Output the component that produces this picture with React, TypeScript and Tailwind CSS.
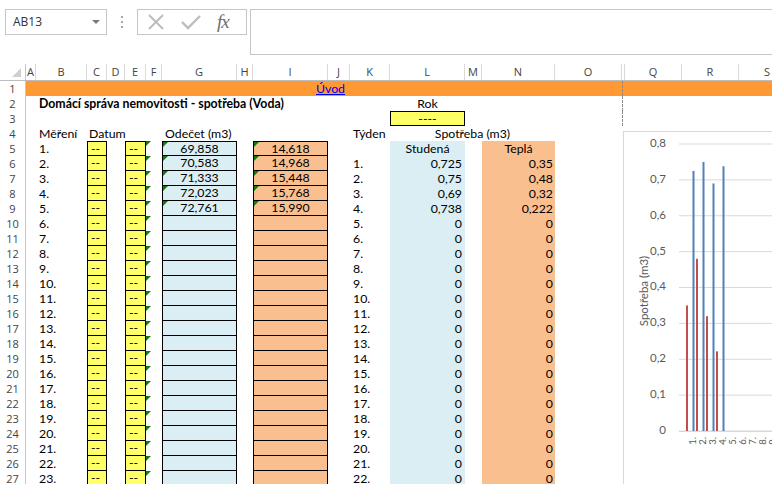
import React from "react";

const cols = ["A", "B", "C", "D", "E", "F", "G", "H", "I", "J", "K", "L", "M", "N", "O", "P", "Q", "R", "S"] as const;
type Col = (typeof cols)[number];

const W: Record<Col, string> = {
  A: "w-[10px]",
  B: "w-[51px]",
  C: "w-[20px]",
  D: "w-[18px]",
  E: "w-[21px]",
  F: "w-[16px]",
  G: "w-[75px]",
  H: "w-[16px]",
  I: "w-[75px]",
  J: "w-[22px]",
  K: "w-[40px]",
  L: "w-[75px]",
  M: "w-[17px]",
  N: "w-[73px]",
  O: "w-[67px]",
  P: "w-[3px]",
  Q: "w-[57px]",
  R: "w-[57px]",
  S: "w-[57px]",
};

const odecetG = ["69,858", "70,583", "71,333", "72,023", "72,761"];
const odecetI = ["14,618", "14,968", "15,448", "15,768", "15,990"];
const studena = ["0,725", "0,75", "0,69", "0,738"];
const tepla = ["0,35", "0,48", "0,32", "0,222"];

function Flag() {
  return (
    <span className="absolute left-0 top-0 w-0 h-0 border-t-[5px] border-r-[5px] border-t-[#137a13] border-r-transparent" />
  );
}

function Toolbar() {
  return (
    <div className="h-[64px] flex items-start pt-[9px] pl-[5px]">
      {/* name box */}
      <div className="w-[102px] h-[26px] shrink-0 border border-[#c6c6c6] flex items-center justify-between pl-[7px] pr-[6px]">
        <span className="font-['Open_Sans',sans-serif] text-[12px] text-[#333]">AB13</span>
        <svg width="8" height="5" viewBox="0 0 8 5">
          <path d="M0 0 L8 0 L4 4 Z" fill="#7a7a7a" />
        </svg>
      </div>
      <div className="w-[30px] h-[26px] shrink-0 flex flex-col items-center justify-center gap-[3px]">
        <span className="w-[2px] h-[2px] bg-[#a6a6a6]" />
        <span className="w-[2px] h-[2px] bg-[#a6a6a6]" />
        <span className="w-[2px] h-[2px] bg-[#a6a6a6]" />
      </div>
      {/* cancel / enter / fx */}
      <div className="w-[110px] h-[26px] shrink-0 border border-[#c6c6c6] flex items-center pl-[9px] gap-[16px]">
        <svg width="18" height="16" viewBox="0 0 18 16">
          <path d="M2 1 L16 15 M16 1 L2 15" stroke="#bdbdbd" strokeWidth="2" fill="none" />
        </svg>
        <svg width="20" height="16" viewBox="0 0 20 16">
          <path d="M1 8 L7 14 L19 2" stroke="#bdbdbd" strokeWidth="2.4" fill="none" />
        </svg>
        <span className="font-['Liberation_Serif',serif] italic text-[19px] leading-[20px] text-[#6e6e6e] tracking-[-1px]">
          fx
        </span>
      </div>
      <div className="ml-[3px] h-[46px] flex-1 border border-r-0 border-[#c6c6c6]" />
    </div>
  );
}

function ColumnHeaders() {
  return (
    <div className="flex h-[17px] border-b border-[#bcbcbc] text-[#444] font-['Open_Sans',sans-serif] text-[11px] leading-[16px]">
      <div className="w-[26px] shrink-0 relative border-r border-[#c6c6c6]">
        <span className="absolute right-[4px] bottom-[3px] w-0 h-0 border-b-[9px] border-l-[9px] border-b-[#cfcfcf] border-l-transparent" />
      </div>
      {cols.map((c) => (
        <div key={c} className={`${W[c]} shrink-0 text-center border-r border-[#dadada] overflow-hidden`}>
          {c === "P" ? "" : c}
        </div>
      ))}
    </div>
  );
}

function cellClass(c: Col, r: number): string {
  if (r === 1) {
    if (c === "P") return "bg-[#ff9933] border-l border-dashed border-[#8c8c8c]";
    return "bg-[#ff9933]";
  }
  if (c === "P" && r <= 3) return "border-l border-dashed border-[#8c8c8c]";
  if (r === 3 && c === "L") return "bg-[#ffff66] border border-black text-center leading-[13px]";
  if (r >= 5) {
    const top = r === 5;
    if (c === "C" || c === "E")
      return top
        ? "bg-[#ffff66] border border-black pl-[3px] leading-[13px]"
        : "bg-[#ffff66] border-x border-b border-black pl-[3px] leading-[14px]";
    if (c === "G")
      return top
        ? "bg-[#daeef3] border border-black text-center leading-[13px]"
        : "bg-[#daeef3] border-x border-b border-black text-center leading-[14px]";
    if (c === "I")
      return top
        ? "bg-[#fabf8f] border border-black text-center leading-[13px]"
        : "bg-[#fabf8f] border-x border-b border-black text-center leading-[14px]";
    if (c === "L") return top ? "bg-[#daeef3] text-center" : "bg-[#daeef3] text-right pr-[3px]";
    if (c === "N") return top ? "bg-[#fabf8f] text-center" : "bg-[#fabf8f] text-right pr-[2px]";
    if (c === "B" || c === "K") return "pl-[3px]";
  }
  return "";
}

function cellContent(c: Col, r: number): React.ReactNode {
  if (r === 1 && c === "J")
    return (
      <span className="absolute left-[-12px] top-0 text-[#0000ee] underline whitespace-nowrap">Úvod</span>
    );
  if (r === 2 && c === "B")
    return (
      <span className="absolute left-[3px] top-0 z-10 font-bold whitespace-nowrap">
        Domácí správa nemovitosti - spotřeba (Voda)
      </span>
    );
  if (r === 2 && c === "L") return <div className="text-center">Rok</div>;
  if (r === 3 && c === "L") return "----";
  if (r === 4) {
    if (c === "B") return <span className="absolute left-[3px] top-0 z-10 whitespace-nowrap">Měření</span>;
    if (c === "C") return <span className="absolute left-[2px] top-0 z-10 whitespace-nowrap">Datum</span>;
    if (c === "G") return <span className="absolute left-[3px] top-0 z-10 whitespace-nowrap">Odečet (m3)</span>;
    if (c === "K") return <span className="absolute left-[3px] top-0 z-10 whitespace-nowrap">Týden</span>;
    if (c === "L")
      return (
        <span className="absolute left-0 top-0 z-10 w-[165px] text-center whitespace-nowrap">Spotřeba (m3)</span>
      );
  }
  if (r >= 5) {
    const i = r - 5;
    if (c === "B") return `${i + 1}.`;
    if (c === "C" || c === "E") return "--";
    if (c === "F") return <Flag />;
    if (c === "G")
      return i < 5 ? (
        <>
          <Flag />
          {odecetG[i]}
        </>
      ) : null;
    if (c === "I")
      return i < 5 ? (
        <>
          <Flag />
          {odecetI[i]}
        </>
      ) : null;
    if (c === "K") return i === 0 ? null : `${i}.`;
    if (c === "L") return i === 0 ? "Studená" : studena[i - 1] ?? "0";
    if (c === "N") return i === 0 ? "Teplá" : tepla[i - 1] ?? "0";
  }
  return null;
}

function SheetRow({ r }: { r: number }) {
  return (
    <div className="flex h-[15px] leading-[15px]">
      <div className="w-[26px] shrink-0 border-r border-[#c6c6c6] text-center text-[#444] font-['Open_Sans',sans-serif] text-[11px]">
        {r}
      </div>
      {cols.map((c) => (
        <div key={c} className={`${W[c]} shrink-0 relative h-full ${cellClass(c, r)}`}>
          {cellContent(c, r)}
        </div>
      ))}
    </div>
  );
}

function Chart() {
  const y0 = 299;
  const k = 358.75;
  const yOf = (v: number) => y0 - v * k;
  const ticks = [0.8, 0.7, 0.6, 0.5, 0.4, 0.3, 0.2, 0.1, 0];
  const blue = [0.725, 0.75, 0.69, 0.738];
  const red = [0.35, 0.48, 0.32, 0.222];
  return (
    <div className="absolute left-[623px] top-[131px] w-[160px] h-[360px] bg-white border-l border-t border-[#d9d9d9]">
      <svg width="160" height="360" className="block" fontFamily="Lato, sans-serif">
        {ticks.map((t) => (
          <g key={t}>
            <line x1="55" x2="160" y1={yOf(t)} y2={yOf(t)} stroke="#d9d9d9" strokeWidth="1" />
            <text x="42" y={yOf(t)} fontSize="11.5" fill="#595959" textAnchor="end" dominantBaseline="middle">
              {t === 0 ? "0" : t.toFixed(1).replace(".", ",")}
            </text>
          </g>
        ))}
        <line x1="55" x2="160" y1={y0 + 0.5} y2={y0 + 0.5} stroke="#d9d9d9" strokeWidth="1" />
        {red.map((v, j) => (
          <rect key={`r${j}`} x={62 + 10 * j} y={yOf(v)} width="2" height={v * k} fill="#c0504d" />
        ))}
        {blue.map((v, j) => (
          <rect key={`b${j}`} x={68.5 + 10 * j} y={yOf(v)} width="2" height={v * k} fill="#4f81bd" />
        ))}
        {Array.from({ length: 10 }, (_, j) => (
          <text
            key={`x${j}`}
            transform={`translate(${70 + 10 * j},305) rotate(-90)`}
            fontSize="9.5"
            fill="#595959"
            textAnchor="end"
            dominantBaseline="middle"
          >
            {`${j + 1}.`}
          </text>
        ))}
        <text
          transform="translate(21,159) rotate(-90)"
          fontSize="11.5"
          fill="#595959"
          textAnchor="middle"
          dominantBaseline="middle"
        >
          Spotřeba (m3)
        </text>
      </svg>
    </div>
  );
}

export default function App() {
  const rows = Array.from({ length: 27 }, (_, i) => i + 1);
  return (
    <div className="relative w-[772px] h-[484px] overflow-hidden bg-white text-black font-[Lato,sans-serif] text-[12.3px]">
      <Toolbar />
      <ColumnHeaders />
      {rows.map((r) => (
        <SheetRow key={r} r={r} />
      ))}
      <Chart />
    </div>
  );
}
